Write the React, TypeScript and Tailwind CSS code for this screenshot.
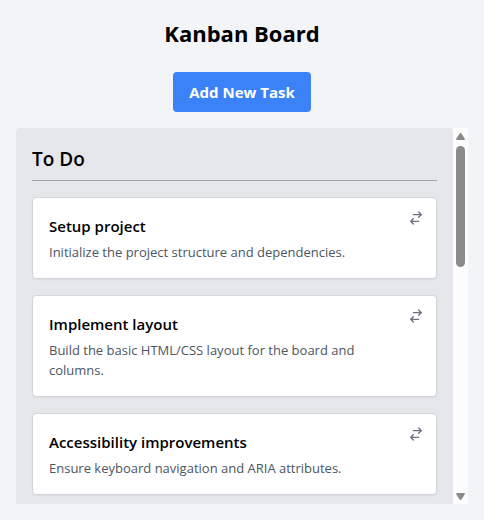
import React from 'react';

interface ITask {
  title: string;
  description: string;
}

const tasks: ITask[] = [
  {
    title: 'Setup project',
    description: 'Initialize the project structure and dependencies.',
  },
  {
    title: 'Implement layout',
    description: 'Build the basic HTML/CSS layout for the board and columns.',
  },
  {
    title: 'Accessibility improvements',
    description: 'Ensure keyboard navigation and ARIA attributes.',
  },
];

const MoveIcon: React.FC = () => (
  <svg
    className="w-4 h-4"
    viewBox="0 0 24 24"
    fill="none"
    stroke="currentColor"
    strokeWidth="2"
    strokeLinecap="round"
    strokeLinejoin="round"
    aria-hidden="true">
    <path d="M8 7h12m0 0l-4-4m4 4l-4 4m0 6H4m0 0l4 4m-4-4l4-4" />
  </svg>
);

const TaskCard: React.FC<ITask> = ({ title, description }) => (
  <li className="relative p-4 bg-white border border-[#d1d5db] rounded shadow-xs">
    <h3 className="text-[15px] leading-6 font-semibold text-black">{title}</h3>
    <p className="mt-1 pr-6 text-[13px] leading-5 text-[#4b5563]">{description}</p>
    <button type="button" aria-label={`Move ${title}`} className="absolute top-2 right-2 p-1 text-[#6b7280]">
      <MoveIcon />
    </button>
  </li>
);

const ScrollBar: React.FC = () => (
  <div className="flex flex-col items-center shrink-0 w-[15px] pt-[5px] pb-1 bg-[#fcfcfc] text-[#8b8b8b]" aria-hidden="true">
    <svg className="w-[9px] h-[7px] shrink-0" viewBox="0 0 9 7" fill="currentColor">
      <path d="M4.5 0Q5.2 0 5.6 .7L8.8 5.8Q9.2 7 8 7H1Q-.2 7 .2 5.8L3.4 .7Q3.8 0 4.5 0Z" />
    </svg>
    <div className="w-[9px] h-[121px] mt-[6px] shrink-0 rounded-full bg-[#8b8b8b]" />
    <svg className="w-[9px] h-[7px] mt-auto shrink-0" viewBox="0 0 9 7" fill="currentColor">
      <path d="M4.5 7Q5.2 7 5.6 6.3L8.8 1.2Q9.2 0 8 0H1Q-.2 0 .2 1.2L3.4 6.3Q3.8 7 4.5 7Z" />
    </svg>
  </div>
);

const App: React.FC = () => {
  return (
    <div className="flex flex-col h-screen p-4 bg-[#f3f4f6] text-black font-['Segoe_UI','Open_Sans','Noto_Sans',sans-serif]">
      <h1 className="mb-[22px] text-[22px] leading-[34px] font-bold text-center">Kanban Board</h1>
      <button
        type="button"
        className="self-center px-4 py-2 mb-4 text-[15px] leading-6 font-bold text-white bg-[#3b82f6] rounded">
        Add New Task
      </button>
      <main className="flex flex-1 min-h-0">
        <section className="flex-1 min-w-0 p-4 overflow-hidden bg-[#e5e7eb] rounded-t">
          <h2 className="pb-[6px] mb-4 text-[19px] leading-[30px] font-semibold border-b border-[#9ca3af]">To Do</h2>
          <ul className="flex flex-col gap-4">
            {tasks.map((task) => (
              <TaskCard key={task.title} {...task} />
            ))}
          </ul>
        </section>
        <ScrollBar />
      </main>
    </div>
  );
};

export default App;
